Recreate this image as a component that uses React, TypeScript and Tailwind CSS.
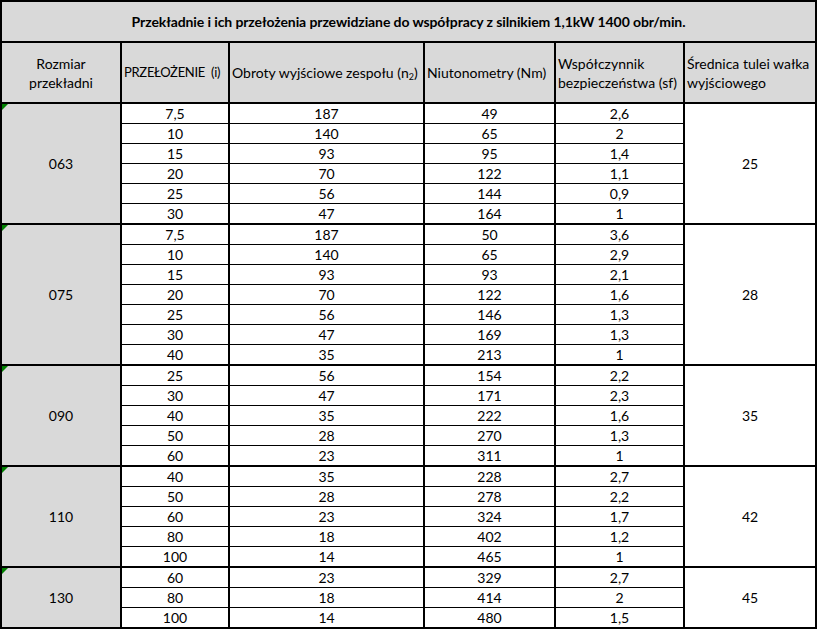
const groups = [
  {
    size: "063",
    sleeve: "25",
    rows: [
      ["7,5", "187", "49", "2,6"],
      ["10", "140", "65", "2"],
      ["15", "93", "95", "1,4"],
      ["20", "70", "122", "1,1"],
      ["25", "56", "144", "0,9"],
      ["30", "47", "164", "1"],
    ],
  },
  {
    size: "075",
    sleeve: "28",
    rows: [
      ["7,5", "187", "50", "3,6"],
      ["10", "140", "65", "2,9"],
      ["15", "93", "93", "2,1"],
      ["20", "70", "122", "1,6"],
      ["25", "56", "146", "1,3"],
      ["30", "47", "169", "1,3"],
      ["40", "35", "213", "1"],
    ],
  },
  {
    size: "090",
    sleeve: "35",
    rows: [
      ["25", "56", "154", "2,2"],
      ["30", "47", "171", "2,3"],
      ["40", "35", "222", "1,6"],
      ["50", "28", "270", "1,3"],
      ["60", "23", "311", "1"],
    ],
  },
  {
    size: "110",
    sleeve: "42",
    rows: [
      ["40", "35", "228", "2,7"],
      ["50", "28", "278", "2,2"],
      ["60", "23", "324", "1,7"],
      ["80", "18", "402", "1,2"],
      ["100", "14", "465", "1"],
    ],
  },
  {
    size: "130",
    sleeve: "45",
    rows: [
      ["60", "23", "329", "2,7"],
      ["80", "18", "414", "2"],
      ["100", "14", "480", "1,5"],
    ],
  },
];

const widths = ["w-[108px]", "w-[195px]", "w-[131px]", "w-[129px]"];

const App = () => {
  return (
    <div className="bg-white w-[818px] h-[629px] font-['Lato',sans-serif] text-[14px] text-black">
      <div className="w-[817px] h-[629px] border-2 border-black flex flex-col">
        <div className="h-[41px] shrink-0 bg-[#d9d9d9] border-b-2 border-black flex items-center justify-center font-bold tracking-[-0.1px]">
          Przekładnie i ich przełożenia przewidziane do współpracy z silnikiem 1,1kW 1400 obr/min.
        </div>
        <div className="h-[61px] shrink-0 bg-[#d9d9d9] border-b-2 border-black flex leading-[19px]">
          <div className="w-[120px] border-r-2 border-black flex items-center justify-center text-center">
            Rozmiar
            <br />
            przekładni
          </div>
          <div className="w-[108px] border-r-2 border-black flex items-center px-[2px] whitespace-pre overflow-hidden text-[13px] tracking-[-0.3px]">
            PRZEŁOŻENIE  (i)
          </div>
          <div className="w-[195px] border-r-2 border-black flex items-center px-[2px] whitespace-nowrap">
            <span>
              Obroty wyjściowe zespołu (n<sub className="text-[9px]">2</sub>)
            </span>
          </div>
          <div className="w-[131px] border-r-2 border-black flex items-center px-[2px] whitespace-nowrap">
            Niutonometry (Nm)
          </div>
          <div className="w-[129px] border-r-2 border-black flex items-center px-[2px]">
            <span>
              Współczynnik
              <br />
              bezpieczeństwa (sf)
            </span>
          </div>
          <div className="w-[130px] flex items-center px-[2px]">
            <span>
              Średnica tulei wałka
              <br />
              wyjściowego
            </span>
          </div>
        </div>
        {groups.map((group, gi) => (
          <div
            key={group.size}
            className={`flex shrink-0 ${gi < groups.length - 1 ? "border-b-2 border-black" : ""}`}
          >
            <div className="relative w-[120px] bg-[#d9d9d9] border-r-2 border-black flex items-center justify-center">
              <div className="absolute left-0 top-0 w-0 h-0 border-t-[6px] border-t-[#008000] border-r-[6px] border-r-transparent" />
              {group.size}
            </div>
            <div className="flex flex-col">
              {group.rows.map((row, ri) => (
                <div
                  key={ri}
                  className={`flex ${ri < group.rows.length - 1 ? "h-[20px] border-b border-black" : "h-[19px]"}`}
                >
                  {row.map((cell, ci) => (
                    <div
                      key={ci}
                      className={`${widths[ci]} border-r-2 border-black flex items-center justify-center leading-none`}
                    >
                      {cell}
                    </div>
                  ))}
                </div>
              ))}
            </div>
            <div className="w-[130px] flex items-center justify-center">{group.sleeve}</div>
          </div>
        ))}
      </div>
    </div>
  );
};

export default App;
